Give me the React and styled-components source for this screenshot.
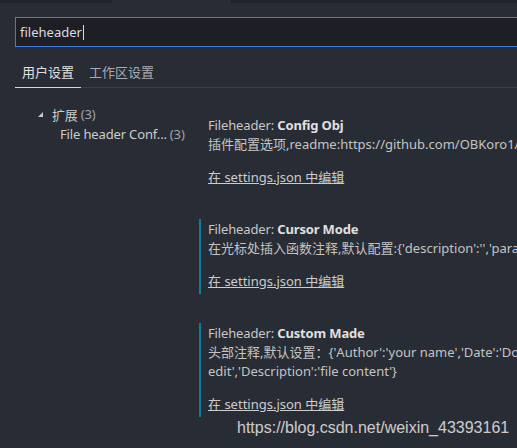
import React from 'react';
import styled, { createGlobalStyle } from 'styled-components';

const Global = createGlobalStyle`
  html, body {
    margin: 0;
    padding: 0;
    background: #282c34;
    overflow: hidden;
  }
  body {
    font-family: "Noto Sans", "Noto Sans CJK SC", sans-serif;
    font-size: 13px;
    color: #cccccc;
  }
`;

const Page = styled.div`
  position: relative;
  width: 517px;
  height: 448px;
  overflow: hidden;
  background: #282c34;
`;

const TabStrip = styled.div`
  display: flex;
  height: 3px;
  background: #21252b;
`;

const StripTab = styled.div`
  width: ${p => p.w}px;
  background: ${p => (p.active ? '#282c34' : '#21252b')};
  border-right: 1px solid #1b1d22;
`;

const SearchRow = styled.div`
  padding: 14px 0 0 15px;
`;

const SearchBox = styled.div`
  display: flex;
  align-items: center;
  width: 520px;
  height: 28px;
  border: 1px solid #3b7be2;
  background: #1e1f24;
  padding-left: 4px;
  color: #d7dae0;
  font-size: 13px;
`;

const Caret = styled.span`
  display: inline-block;
  width: 1px;
  height: 15px;
  background: #d7dae0;
  margin-left: 1px;
`;

const TabBar = styled.div`
  display: flex;
  margin: 9px 0 0 15px;
  border-bottom: 1px solid #3a3e46;
`;

const Tab = styled.div`
  padding: 0 ${p => (p.active ? 7 : 8)}px;
  line-height: 32px;
  font-size: 13px;
  color: ${p => (p.active ? '#e0e0e0' : '#a8abb0')};
  box-shadow: ${p => (p.active ? 'inset 0 -1px 0 #d8d8d8' : 'none')};
  margin-bottom: -1px;
`;

const Body = styled.div`
  display: flex;
  padding-top: 16px;
`;

const Tree = styled.div`
  width: 199px;
  flex-shrink: 0;
`;

const TreeRow = styled.div`
  display: flex;
  align-items: center;
  height: 20px;
  padding-left: ${p => p.indent}px;
  color: #cccccc;
  white-space: nowrap;
  letter-spacing: -0.15px;
`;

const Twistie = styled.span`
  width: 0;
  height: 0;
  border-left: 5px solid transparent;
  border-bottom: 5px solid #c8c8c8;
  margin-right: 9px;
`;

const Count = styled.span`
  color: #a0a4ab;
  margin-left: 3px;
`;

const List = styled.div`
  display: flex;
  flex-direction: column;
  gap: 29px;
  padding-top: 11px;
  flex: 1;
  min-width: 0;
`;

const Item = styled.div`
  border-left: 2px solid ${p => (p.focused ? '#0f7e9b' : 'transparent')};
  padding: 0 0 3px 7px;
`;

const Title = styled.div`
  line-height: 20px;
  color: #c8c8c8;
  white-space: nowrap;
  letter-spacing: -0.15px;
  b {
    color: #e0e0e0;
    font-weight: 700;
  }
`;

const Desc = styled.div`
  line-height: 19px;
  color: #c4c4c4;
  white-space: nowrap;
`;

const EditLink = styled.a`
  display: inline-block;
  margin-top: 13px;
  line-height: 20px;
  color: #cccccc;
  text-decoration: underline;
  cursor: pointer;
`;

const Watermark = styled.div`
  position: absolute;
  left: 237px;
  top: 419px;
  font-family: "Liberation Sans", Arial, sans-serif;
  font-size: 16px;
  color: #e8e8e8;
  opacity: 0.85;
  white-space: nowrap;
`;

const settings = [
  {
    name: 'Config Obj',
    desc: ['插件配置选项,readme:https://github.com/OBKoro1/koro1FileHeader'],
  },
  {
    name: 'Cursor Mode',
    desc: ["在光标处插入函数注释,默认配置:{'description':'','param':''}"],
    focused: true,
  },
  {
    name: 'Custom Made',
    desc: [
      "头部注释,默认设置：{'Author':'your name','Date':'Do not",
      "edit','Description':'file content'}",
    ],
    focused: true,
  },
];

const App = () => {
  return (
    <Page>
      <Global />
      <TabStrip>
        <StripTab w={110} />
        <StripTab w={120} active />
      </TabStrip>
      <SearchRow>
        <SearchBox>
          fileheader
          <Caret />
        </SearchBox>
      </SearchRow>
      <TabBar>
        <Tab active>用户设置</Tab>
        <Tab>工作区设置</Tab>
      </TabBar>
      <Body>
        <Tree>
          <TreeRow indent={38}>
            <Twistie />
            扩展<Count>(3)</Count>
          </TreeRow>
          <TreeRow indent={60}>
            File header Conf...<Count>(3)</Count>
          </TreeRow>
        </Tree>
        <List>
          {settings.map(s => (
            <Item key={s.name} focused={s.focused}>
              <Title>
                Fileheader: <b>{s.name}</b>
              </Title>
              {s.desc.map(line => (
                <Desc key={line}>{line}</Desc>
              ))}
              <EditLink>在 settings.json 中编辑</EditLink>
            </Item>
          ))}
        </List>
      </Body>
      <Watermark>https://blog.csdn.net/weixin_43393161</Watermark>
    </Page>
  );
};

export default App;
